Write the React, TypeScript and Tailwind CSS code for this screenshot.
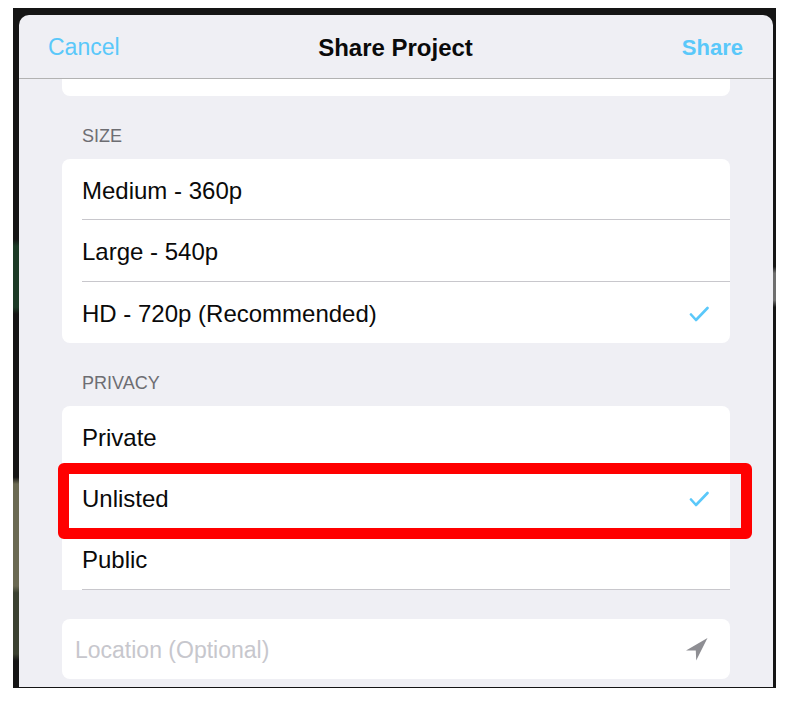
const font = { fontFamily: '"Liberation Sans", Arial, sans-serif' };

function Check() {
  return (
    <svg width="20" height="16" viewBox="0 0 20 16" fill="none">
      <path
        d="M2 8.5l5 5.5L18.5 2"
        stroke="#5ac8fa"
        strokeWidth="2.6"
        strokeLinecap="round"
        strokeLinejoin="round"
      />
    </svg>
  );
}

function LocationArrow() {
  return (
    <svg width="22" height="23" viewBox="0 0 22 23">
      <polygon points="21.5,0 0,12.5 9.8,12.6 10.2,22.5" fill="#8e8e93" />
    </svg>
  );
}

interface RowProps {
  label: string;
  checked?: boolean;
  last?: boolean;
}

function Row({ label, checked, last }: RowProps) {
  return (
    <div className="h-[61.33px] pl-[20px] flex">
      <div
        className={`flex-1 flex items-center justify-between pt-[3px] pr-[21px] ${
          last ? "" : "border-b border-[#c8c7cc]"
        }`}
      >
        <span className="text-[24px] text-[#0a0a0a]">{label}</span>
        {checked && <Check />}
      </div>
    </div>
  );
}

function SectionLabel({ text }: { text: string }) {
  return (
    <div className="h-[63px] pt-[31px] pl-[20px] text-[18px] leading-[18px] text-[#6d6d72]">
      {text}
    </div>
  );
}

export default function App() {
  return (
    <div className="min-h-screen bg-white pl-[13px] pt-[8px]" style={font}>
      <div className="flex h-[680px] w-[763px] bg-[#151515] pt-[7px]">
        <div className="w-[6px] -mt-[7px] h-[680px] bg-[linear-gradient(to_bottom,#151515_34%,#1c3a26_35%,#1c3a26_44%,#151515_45%,#151515_69%,#6a6952_70%,#6a6952_85%,#3b4131_86%,#3b4131_95%,#151515_96%)]" />

        <div className="relative w-[754px] h-[672px] bg-[#efeff4] rounded-t-[10px] overflow-hidden flex flex-col">
          {/* header */}
          <div className="h-[64px] shrink-0 border-b border-[#b2b2b2] grid grid-cols-[1fr_auto_1fr] items-center pt-[2px] pl-[29px] pr-[30px]">
            <span className="text-[23px] text-[#5ac8fa]">Cancel</span>
            <span className="text-[24px] font-bold text-[#0a0a0a]">
              Share Project
            </span>
            <span className="text-[22px] font-bold text-[#5ac8fa] justify-self-end">
              Share
            </span>
          </div>

          <div className="px-[43px] flex flex-col">
            <div className="h-[17px] bg-white rounded-b-[8px]" />

            <SectionLabel text="SIZE" />
            <div className="bg-white rounded-[8px]">
              <Row label="Medium - 360p" />
              <Row label="Large - 540p" />
              <Row label="HD - 720p (Recommended)" checked last />
            </div>

            <SectionLabel text="PRIVACY" />
            <div className="bg-white rounded-t-[8px]">
              <Row label="Private" />
              <Row label="Unlisted" checked />
              <Row label="Public" />
            </div>

            <div className="h-[29px]" />
            <div className="h-[60px] bg-white rounded-[8px] flex items-center justify-between pt-[2px] pl-[13px] pr-[22px]">
              <span className="text-[23px] text-[#c7c7cd]">
                Location (Optional)
              </span>
              <LocationArrow />
            </div>
          </div>

          {/* highlight annotation */}
          <div className="absolute left-[39px] top-[448px] w-[694px] h-[76px] border-[11px] border-[#ff0000] rounded-[6px]" />
        </div>

        <div className="w-[3px] -mt-[7px] h-[680px] bg-[linear-gradient(to_bottom,#151515_38%,#6e6e6e_39%,#6e6e6e_43%,#151515_44%,#151515_100%)]" />
      </div>
    </div>
  );
}
